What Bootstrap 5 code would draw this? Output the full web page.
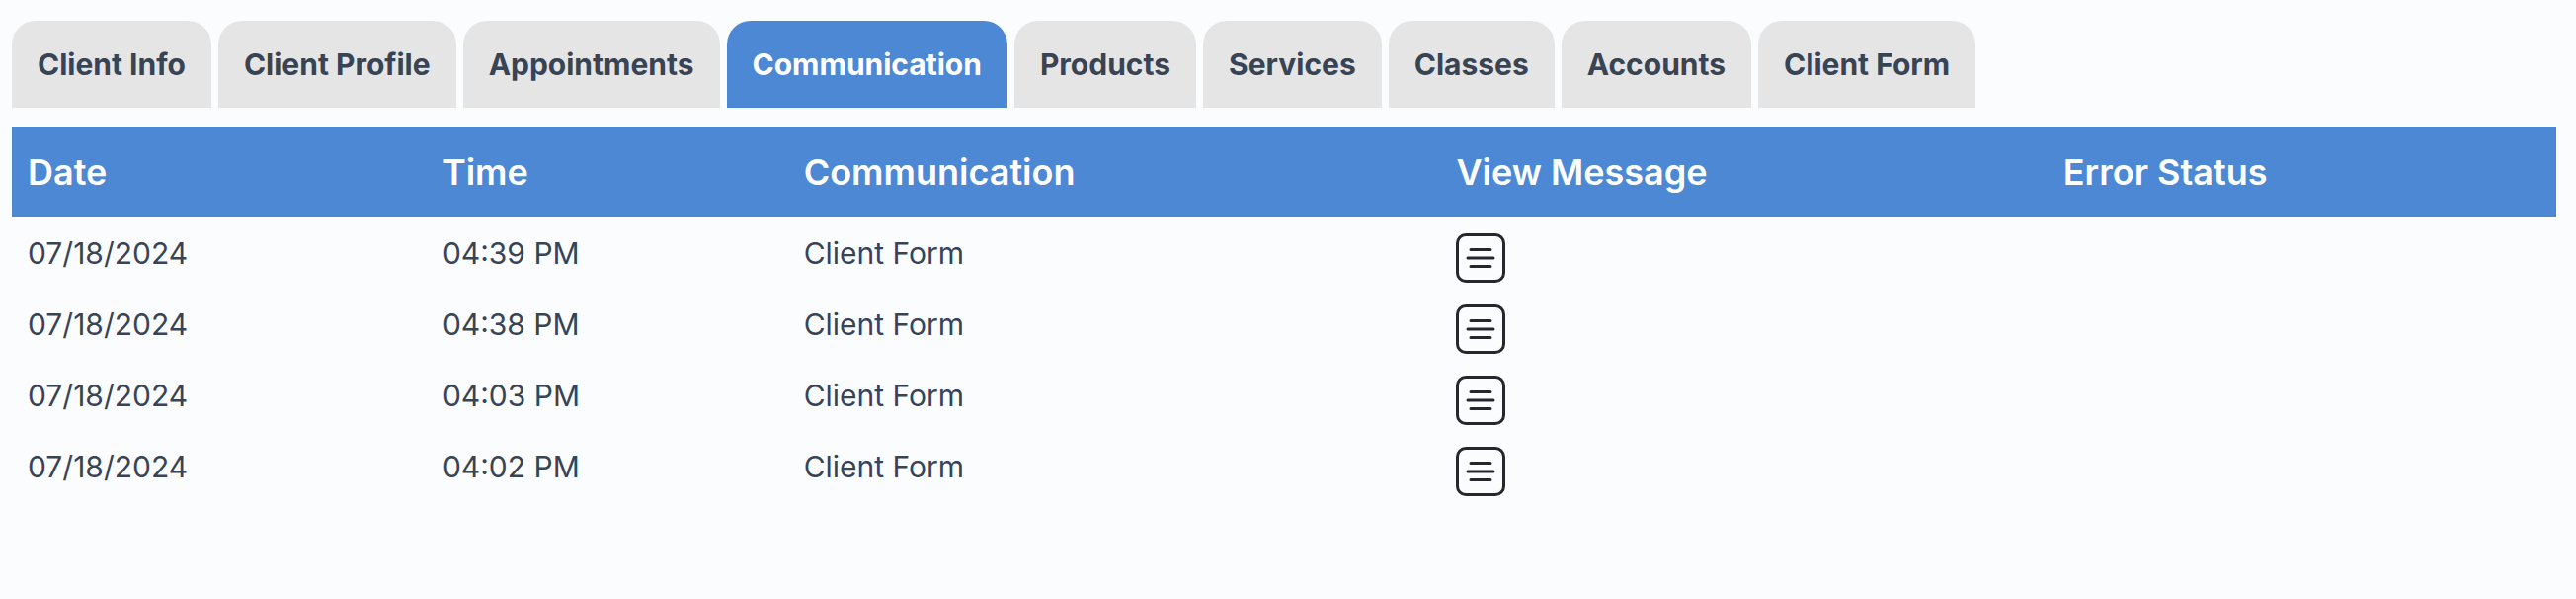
<!DOCTYPE html>
<html lang="en">
<head>
<meta charset="utf-8">
<meta name="viewport" content="width=device-width, initial-scale=1">
<title>Client communication</title>
<link href="https://cdn.jsdelivr.net/npm/bootstrap@5.3.0/dist/css/bootstrap.min.css" rel="stylesheet">
<style>
body { background: #fbfcfe; color: #384454; font-family: Inter, "Liberation Sans", sans-serif; font-size: 30px; line-height: 44px; }
.page { padding: 21px 20px 0 12px; }
.client-tabs { gap: 7px; margin-bottom: 19px; }
.client-tabs .nav-link { padding: 22px 26px; border-radius: 24px 24px 0 0; background: #e5e5e5; color: #384454; font-weight: 700; }
.client-tabs .nav-link.active { background: #4c88d4; color: #fff; }
.log-table { table-layout: fixed; color: inherit; --bs-table-bg: transparent; --bs-table-color: #384454; }
.log-table th { height: 92px; padding: 0 16px; background: #4c88d4; color: #fff; font-size: 36px; font-weight: 600; vertical-align: middle; }
.log-table td { height: 72px; padding: 14px 16px 0; }
.col-date { width: 16.3%; }
.col-time { width: 14.2%; }
.col-type { width: 25.65%; }
.col-view { width: 23.85%; }
.view-btn { display: block; margin-top: 2px; padding: 0; border: 0; background: none; color: #26262f; }
.view-btn svg { display: block; width: 50px; height: 50px; }
</style>
</head>
<body>
<svg class="d-none" aria-hidden="true">
  <symbol id="message" viewBox="0 0 50 50">
    <g fill="none" stroke="currentColor" stroke-width="3" stroke-linecap="round">
      <rect x="1.5" y="1.5" width="47" height="47" rx="8.5"/>
      <path d="M15 16.5H35M12 25H38M15 33.5H35"/>
    </g>
  </symbol>
</svg>
<main class="page">
  <ul class="nav client-tabs">
    <li class="nav-item"><a class="nav-link" href="#">Client Info</a></li>
    <li class="nav-item"><a class="nav-link" href="#">Client Profile</a></li>
    <li class="nav-item"><a class="nav-link" href="#">Appointments</a></li>
    <li class="nav-item"><a class="nav-link active" aria-current="page" href="#">Communication</a></li>
    <li class="nav-item"><a class="nav-link" href="#">Products</a></li>
    <li class="nav-item"><a class="nav-link" href="#">Services</a></li>
    <li class="nav-item"><a class="nav-link" href="#">Classes</a></li>
    <li class="nav-item"><a class="nav-link" href="#">Accounts</a></li>
    <li class="nav-item"><a class="nav-link" href="#">Client Form</a></li>
  </ul>
  <table class="table table-borderless log-table mb-0">
    <thead>
      <tr>
        <th class="col-date" scope="col">Date</th>
        <th class="col-time" scope="col">Time</th>
        <th class="col-type" scope="col">Communication</th>
        <th class="col-view" scope="col">View Message</th>
        <th scope="col">Error Status</th>
      </tr>
    </thead>
    <tbody>
      <tr><td>07/18/2024</td><td>04:39 PM</td><td>Client Form</td><td><button class="view-btn" type="button" aria-label="View message"><svg><use href="#message"/></svg></button></td><td></td></tr>
      <tr><td>07/18/2024</td><td>04:38 PM</td><td>Client Form</td><td><button class="view-btn" type="button" aria-label="View message"><svg><use href="#message"/></svg></button></td><td></td></tr>
      <tr><td>07/18/2024</td><td>04:03 PM</td><td>Client Form</td><td><button class="view-btn" type="button" aria-label="View message"><svg><use href="#message"/></svg></button></td><td></td></tr>
      <tr><td>07/18/2024</td><td>04:02 PM</td><td>Client Form</td><td><button class="view-btn" type="button" aria-label="View message"><svg><use href="#message"/></svg></button></td><td></td></tr>
    </tbody>
  </table>
</main>
<script src="https://cdn.jsdelivr.net/npm/bootstrap@5.3.0/dist/js/bootstrap.bundle.min.js"></script>
</body>
</html>
